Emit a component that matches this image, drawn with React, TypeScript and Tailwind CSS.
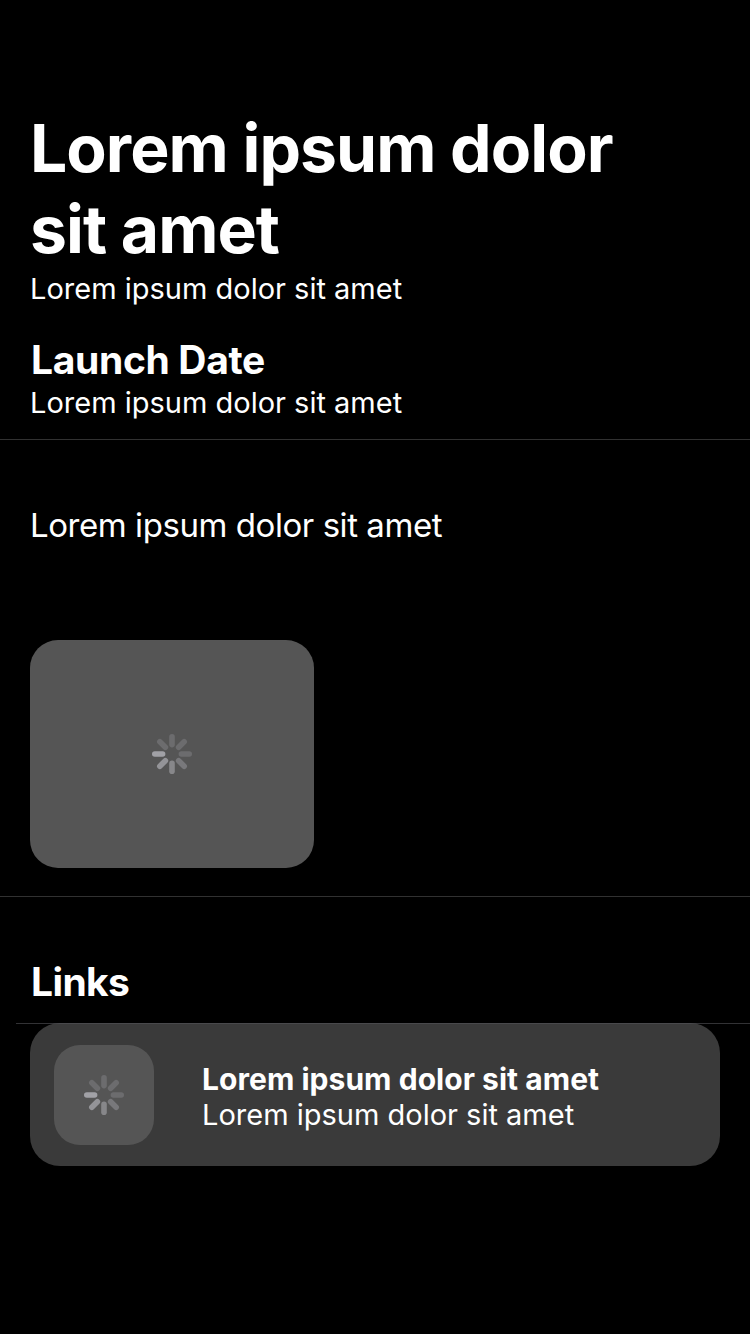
const spokes = [
  { angle: 0, color: "#6c6c6e" },
  { angle: 45, color: "#6c6c6e" },
  { angle: 90, color: "#6c6c6e" },
  { angle: 135, color: "#78787b" },
  { angle: 180, color: "#87878a" },
  { angle: 225, color: "#949498" },
  { angle: 270, color: "#a1a1a6" },
  { angle: 315, color: "#6c6c6e" },
];

function Spinner() {
  return (
    <svg width="40" height="40" viewBox="0 0 40 40">
      {spokes.map((s) => (
        <rect key={s.angle} x="17.2" y="0" width="5.6" height="13.4" rx="2.8" fill={s.color} transform={`rotate(${s.angle} 20 20)`} />
      ))}
    </svg>
  );
}

export default function App() {
  return (
    <main className="flex h-[1334px] w-[750px] flex-col overflow-hidden bg-black pt-[108px] font-['Inter',sans-serif] text-white">
      <header className="flex h-[332px] flex-col border-b border-[#313131] px-[30px]">
        <h1 className="text-[66px] leading-[81px] font-bold tracking-[-0.96px]">
          Lorem ipsum dolor
          <br />
          sit amet
        </h1>
        <p className="mt-0.5 text-[29px] leading-[34px]">Lorem ipsum dolor sit amet</p>
        <h2 className="mt-[30px] pl-px text-[39px] leading-[48px] font-bold tracking-[-0.34px]">Launch Date</h2>
        <p className="mt-px text-[29px] leading-[36px]">Lorem ipsum dolor sit amet</p>
      </header>
      <section className="flex h-[457px] flex-col border-b border-[#313131] px-[30px] pt-[65px]">
        <p className="text-[33px] leading-[40px] tracking-[-0.44px]">Lorem ipsum dolor sit amet</p>
        <div className="mt-[95px] flex h-[228px] w-[284px] items-center justify-center rounded-[28px] bg-[#555555]">
          <Spinner />
        </div>
      </section>
      <section className="flex flex-col pt-[61px]">
        <h2 className="px-[31px] text-[39px] leading-[48px] font-bold tracking-[-0.6px]">Links</h2>
        <div className="relative z-10 mt-[17px] ml-4 border-t border-[#545458]/60" />
        <div className="mx-[30px] -mt-px flex h-[143px] items-center rounded-[30px] bg-[#3a3a3a] pl-6">
          <div className="flex h-[100px] w-[100px] items-center justify-center rounded-[26px] bg-[#555555]">
            <Spinner />
          </div>
          <div className="ml-12 flex flex-col pt-[5px]">
            <h3 className="text-[30px] leading-[36px] font-bold tracking-[0.04px]">Lorem ipsum dolor sit amet</h3>
            <p className="text-[29px] leading-[36px]">Lorem ipsum dolor sit amet</p>
          </div>
        </div>
      </section>
    </main>
  );
}
